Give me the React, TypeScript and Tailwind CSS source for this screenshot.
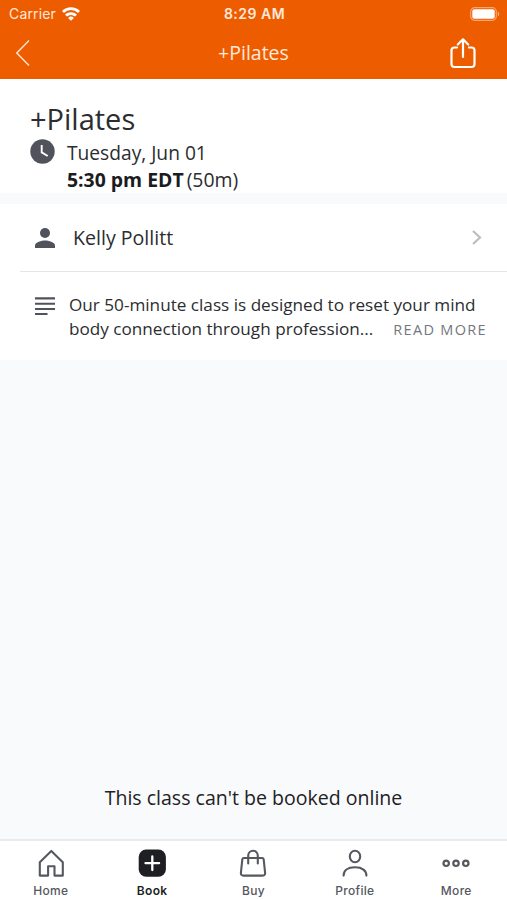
import type { ReactNode } from 'react';

function StatusBar() {
  return (
    <div className="grid grid-cols-3 items-center h-[27px] pl-[9px] pr-[7px] font-['Inter','Liberation_Sans',sans-serif] text-[14px] text-[#ffe9dc]">
      <div className="flex items-center gap-[6px]">
        <span className="tracking-[0.15px]">Carrier</span>
        <svg width="18" height="14" viewBox="0 0 18 14" fill="none" stroke="#fff" strokeWidth="2.8">
          <path d="M1 5a11.4 11.4 0 0 1 16 0" />
          <path d="M4 8.6a7.1 7.1 0 0 1 10 0" />
          <path d="M9 13.8L6.1 10.9a4.2 4.2 0 0 1 5.8 0z" fill="#fff" stroke="none" />
        </svg>
      </div>
      <div className="text-center font-semibold tracking-[0.5px] whitespace-nowrap">8:29 AM</div>
      <svg className="justify-self-end" width="30" height="14" viewBox="0 0 30 14">
        <rect x="0.7" y="0.7" width="25.6" height="12.6" rx="4" fill="none" stroke="#fff" strokeOpacity="0.45" strokeWidth="1.2" />
        <rect x="2.3" y="2.3" width="22.4" height="9.4" rx="2" fill="#fff" />
        <path d="M27.8 4.6a2.7 2.7 0 0 1 0 4.8z" fill="#fff" fillOpacity="0.5" />
      </svg>
    </div>
  );
}

function HomeIcon() {
  return (
    <svg width="28" height="28" viewBox="0 0 28 28" fill="none" stroke="currentColor" strokeWidth="2.1" strokeLinejoin="round">
      <path d="M2.8 13.2L14.3 1.9l11.5 11.3v13.4h-8.3v-9.4h-6.4v9.4H2.8z" />
    </svg>
  );
}

function BookIcon() {
  return (
    <svg width="28" height="28" viewBox="0 0 28 28">
      <rect x="0.7" y="0.6" width="27.2" height="27.2" rx="7.5" fill="#1d1f23" />
      <path d="M14.3 7.4v13.6M7.5 14.2h13.6" stroke="#fff" strokeWidth="2.3" strokeLinecap="round" />
    </svg>
  );
}

function BuyIcon() {
  return (
    <svg width="28" height="28" viewBox="0 0 28 28" fill="none" stroke="currentColor" strokeWidth="2.1" strokeLinecap="round" strokeLinejoin="round">
      <path d="M5 9h18q1.5 0 1.7 1.5l1.4 13.3q.2 2.8-2.5 2.8H4.4q-2.7 0-2.5-2.8L3.3 10.5Q3.5 9 5 9z" />
      <path d="M9.2 14.4V6.8a4.8 5 0 0 1 9.6 0v7.6" />
    </svg>
  );
}

function ProfileIcon() {
  return (
    <svg width="28" height="28" viewBox="0 0 28 28" fill="none" stroke="currentColor" strokeWidth="2.1" strokeLinecap="round">
      <ellipse cx="14" cy="7.5" rx="5.2" ry="5.8" />
      <path d="M2.6 26.6c0-5 4-8.3 11.4-8.3s11.4 3.3 11.4 8.3" />
    </svg>
  );
}

function MoreIcon() {
  return (
    <svg width="28" height="28" viewBox="0 0 28 28" fill="none" stroke="currentColor" strokeWidth="2.2">
      <circle cx="4.2" cy="14.3" r="2.7" />
      <circle cx="14" cy="14.3" r="2.7" />
      <circle cx="23.8" cy="14.3" r="2.7" />
    </svg>
  );
}

const tabs: { label: string; icon: ReactNode; active?: boolean }[] = [
  { label: 'Home', icon: <HomeIcon /> },
  { label: 'Book', icon: <BookIcon />, active: true },
  { label: 'Buy', icon: <BuyIcon /> },
  { label: 'Profile', icon: <ProfileIcon /> },
  { label: 'More', icon: <MoreIcon /> },
];

export default function App() {
  return (
    <div className="flex flex-col h-screen bg-[#f8fafc] font-['Open_Sans','Noto_Sans',sans-serif] text-[#2b2d30]">
      {/* Header */}
      <header className="h-[79px] bg-[#ee5c00] text-white">
        <StatusBar />
        <div className="grid grid-cols-3 items-center h-[51px] pl-[15px] pr-[30px]">
          <svg width="16" height="28" viewBox="0 0 16 28" fill="none" stroke="#ffe2cf" strokeWidth="1.5">
            <path d="M14 1.5L1.8 14L14 26.5" />
          </svg>
          <h1 className="pl-[15px] text-center text-[19.5px] text-[#ffe9dc] whitespace-nowrap">+Pilates</h1>
          <svg className="justify-self-end" width="28" height="32" viewBox="0 0 28 32" fill="none" stroke="#fff" strokeWidth="2.2" strokeLinecap="round" strokeLinejoin="round">
            <path d="M8 10.5H5.5Q2.5 10.5 2.5 13.5V27Q2.5 30 5.5 30h17q3 0 3-3V13.5q0-3-3-3H20" />
            <path d="M14 20V2.5M8.8 7.5L14 2.3l5.2 5.2" />
          </svg>
        </div>
      </header>

      {/* Class summary */}
      <section className="h-[114px] bg-white pl-[30px] pt-[22px]">
        <h2 className="text-[29px] leading-[36px]">+Pilates</h2>
        <div className="flex gap-[12px]">
          <svg className="mt-[2px]" width="25" height="25" viewBox="0 0 25 25">
            <circle cx="12.5" cy="12.5" r="12.2" fill="#50535b" />
            <path d="M11.7 6v7.4l6 3.6" fill="none" stroke="#fff" strokeWidth="1.9" />
          </svg>
          <div className="pt-[2px] text-[19.4px] leading-[27px]">
            <p className="text-[19.2px]">Tuesday, Jun 01</p>
            <p>
              <strong className="font-bold text-[#1b1c1f]">5:30 pm EDT</strong>
              <span className="ml-[3px]">(50m)</span>
            </p>
          </div>
        </div>
      </section>

      {/* Instructor and description */}
      <section className="mt-[11px] h-[156px] bg-white">
        <div className="ml-[20px] flex items-center h-[68px] pl-[15px] pr-[24px] border-b border-[#e4e5e7]">
          <svg width="20" height="20" viewBox="0 0 20 20" fill="#50535b">
            <circle cx="10" cy="5" r="5" />
            <path d="M0 20v-2.5C0 14.2 6.7 12.5 10 12.5s10 1.7 10 5V20z" />
          </svg>
          <span className="ml-[18px] pt-px text-[19.6px]">Kelly Pollitt</span>
          <svg className="ml-auto" width="12" height="16" viewBox="0 0 12 16" fill="none" stroke="#bcbdc0" strokeWidth="2.2">
            <path d="M2 1L9 7.5L2 14" />
          </svg>
        </div>
        <div className="flex pl-[35px] pt-[21px]">
          <svg className="mt-[4px] shrink-0" width="20" height="18" viewBox="0 0 20 18" fill="none" stroke="#50535b" strokeWidth="2.1">
            <path d="M0 1.4h20M0 6.7h20M0 12h20M0 17h12.5" />
          </svg>
          <div className="ml-[14px] text-[17.15px] leading-[24px] whitespace-nowrap">
            <p>Our 50-minute class is designed to reset your mind</p>
            <p>
              body connection through profession...
              <button className="ml-[20px] text-[14.5px] tracking-[1.3px] text-[#74777d]">READ MORE</button>
            </p>
          </div>
        </div>
      </section>

      <p className="mt-auto mb-[28px] text-center text-[19.55px] leading-[27px] text-[#1f2124]">This class can't be booked online</p>

      {/* Tab bar */}
      <nav className="grid grid-cols-5 h-[61px] bg-white border-t-2 border-[#e9ebed]">
        {tabs.map((tab) => (
          <button
            key={tab.label}
            className={`flex flex-col items-center pt-[8px] font-['Inter','Liberation_Sans',sans-serif] text-[12px] ${
              tab.active ? 'text-[#1d1f23] font-semibold' : 'text-[#55585e] font-medium'
            }`}
          >
            {tab.icon}
            <span className="mt-[6px] leading-[16px] tracking-[0.3px]">{tab.label}</span>
          </button>
        ))}
      </nav>
    </div>
  );
}
